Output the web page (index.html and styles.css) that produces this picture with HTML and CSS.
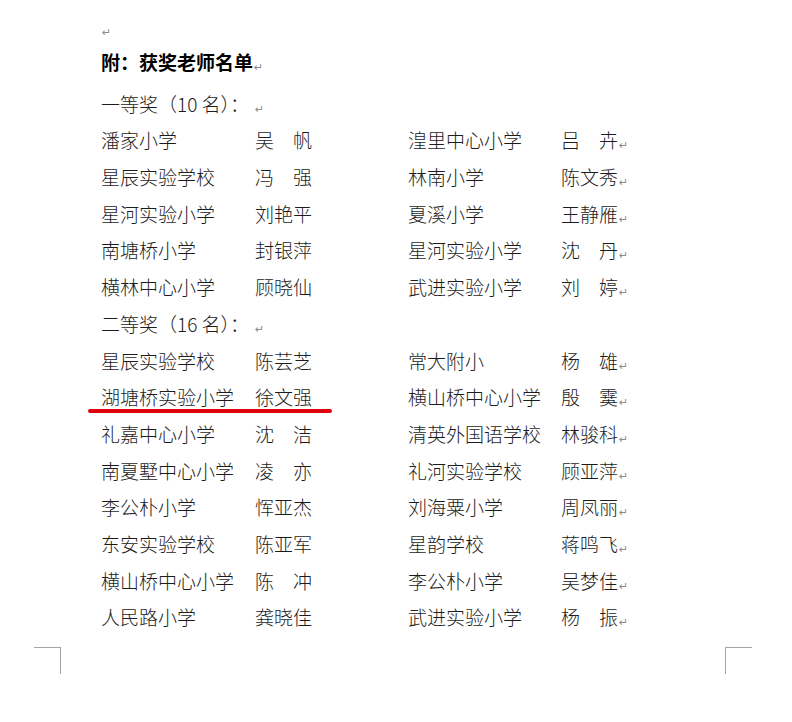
FILE: index.html
```html
<!DOCTYPE html>
<html lang="zh">
<head>
<meta charset="utf-8">
<link rel="stylesheet" href="styles.css">
</head>
<body>
<div class="page">
  <div class="blank"><span class="ret">↵</span></div>
  <div class="title">附：获奖老师名单<span class="ret">↵</span></div>
  <div class="heading">一等奖（10 名）：<span class="ret sp">↵</span></div>
  <div class="list">
    <span>潘家小学</span><span>吴　帆</span><span>湟里中心小学</span><span>吕　卉<span class="ret">↵</span></span>
    <span>星辰实验学校</span><span>冯　强</span><span>林南小学</span><span>陈文秀<span class="ret">↵</span></span>
    <span>星河实验小学</span><span>刘艳平</span><span>夏溪小学</span><span>王静雁<span class="ret">↵</span></span>
    <span>南塘桥小学</span><span>封银萍</span><span>星河实验小学</span><span>沈　丹<span class="ret">↵</span></span>
    <span>横林中心小学</span><span>顾晓仙</span><span>武进实验小学</span><span>刘　婷<span class="ret">↵</span></span>
  </div>
  <div class="heading2">二等奖（16 名）：<span class="ret sp">↵</span></div>
  <div class="list">
    <span>星辰实验学校</span><span>陈芸芝</span><span>常大附小</span><span>杨　雄<span class="ret">↵</span></span>
    <span>湖塘桥实验小学</span><span>徐文强</span><span>横山桥中心小学</span><span>殷　霙<span class="ret">↵</span></span>
    <span>礼嘉中心小学</span><span>沈　洁</span><span>清英外国语学校</span><span>林骏科<span class="ret">↵</span></span>
    <span>南夏墅中心小学</span><span>凌　亦</span><span>礼河实验学校</span><span>顾亚萍<span class="ret">↵</span></span>
    <span>李公朴小学</span><span>恽亚杰</span><span>刘海粟小学</span><span>周凤丽<span class="ret">↵</span></span>
    <span>东安实验学校</span><span>陈亚军</span><span>星韵学校</span><span>蒋鸣飞<span class="ret">↵</span></span>
    <span>横山桥中心小学</span><span>陈　冲</span><span>李公朴小学</span><span>吴梦佳<span class="ret">↵</span></span>
    <span>人民路小学</span><span>龚晓佳</span><span>武进实验小学</span><span>杨　振<span class="ret">↵</span></span>
  </div>
  <div class="mark"></div>
  <div class="corner corner-left"></div>
  <div class="corner corner-right"></div>
</div>
</body>
</html>
```

FILE: styles.css
```css
html, body {
  margin: 0;
  padding: 0;
  background: #ffffff;
}

.page {
  position: relative;
  width: 792px;
  height: 722px;
  box-sizing: border-box;
  padding: 10px 0 0 101px;
  font-family: "Noto Sans CJK SC", "Liberation Sans", sans-serif;
  font-size: 19px;
  color: #1c1c1c;
  font-weight: 300;
}

.blank {
  height: 34px;
  line-height: 34px;
}

.title {
  line-height: 36.7px;
  height: 36.7px;
  font-weight: 700;
  color: #000;
  margin-bottom: 5px;
}

.heading, .heading2 {
  line-height: 36.7px;
  height: 36.7px;
}

.list {
  display: grid;
  grid-template-columns: 154px 153px 153px auto;
  grid-auto-rows: 36.7px;
  line-height: 36.7px;
  white-space: nowrap;
}

.ret {
  font-family: "DejaVu Sans", sans-serif;
  font-size: 11px;
  font-weight: 400;
  color: #8a8a8a;
  margin-left: 1px;
  vertical-align: -1px;
}

.ret.sp {
  margin-left: 6px;
}

.mark {
  position: absolute;
  left: 88px;
  top: 409px;
  width: 244px;
  height: 4px;
  border-radius: 2px;
  background: #e0000c;
}

.corner {
  position: absolute;
  top: 647px;
  width: 27px;
  height: 27px;
  box-sizing: border-box;
  border-color: #a6a6a6;
  border-style: solid;
  border-width: 0;
}

.corner-left {
  left: 34px;
  border-top-width: 1px;
  border-right-width: 1px;
}

.corner-right {
  left: 725px;
  border-top-width: 1px;
  border-left-width: 1px;
}
```
